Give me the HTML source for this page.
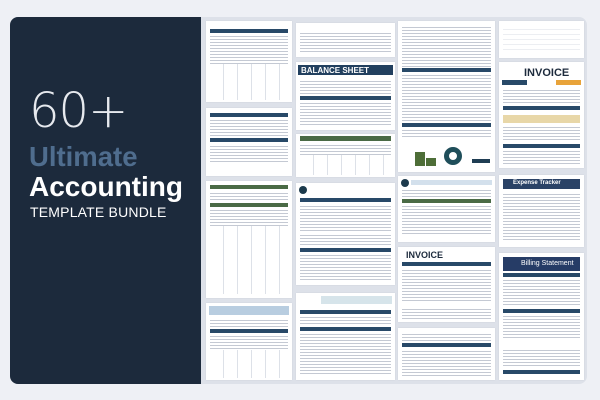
<!DOCTYPE html>
<html><head><style>
*{margin:0;padding:0;box-sizing:border-box}
body{width:600px;height:400px;background:#eef0f5;position:relative;overflow:hidden;font-family:"Liberation Sans",sans-serif}
.card{position:absolute;left:10px;top:17px;width:577px;height:367px;border-radius:8px;background:#dde1e9;overflow:hidden}
.left{position:absolute;left:0;top:0;width:191px;height:367px;background:#1c2a3c}
.t{position:absolute;background:#fff;overflow:hidden;box-shadow:0 0 1px #c5cad4}
.rows{position:absolute;left:4px;right:4px;background:repeating-linear-gradient(#fff 0 2px,#c4c9d3 2px 3px)}
.cols{position:absolute;left:4px;right:4px;background:repeating-linear-gradient(90deg,transparent 0 13px,#dde1e8 13px 14px)}
.bar{position:absolute;left:4px;right:4px;height:4px}
.n{background:#284968}.g{background:#4a6a45}
.txt{position:absolute;font-weight:bold;color:#1c2a3c}
</style></head><body>
<div class="card">
<div class="left">
<div style="position:absolute;left:19px;top:66px;font-size:48px;color:#e6e9ee;letter-spacing:-1px;font-family:'DejaVu Sans',sans-serif;font-weight:200">60+</div>
<div style="position:absolute;left:19px;top:124px;font-size:27.5px;font-weight:bold;color:#4f6d8e">Ultimate</div>
<div style="position:absolute;left:19px;top:154px;font-size:28px;font-weight:bold;color:#fff">Accounting</div>
<div style="position:absolute;left:20px;top:187px;font-size:14px;color:#fff;letter-spacing:.2px">TEMPLATE BUNDLE</div>
</div>

<!-- col1 -->
<div class="t" style="left:196px;top:4px;width:86px;height:81px"><div class="bar n" style="top:8px"></div><div class="rows" style="top:13px;height:30px"></div><div class="cols" style="top:43px;height:36px"></div></div>
<div class="t" style="left:196px;top:91px;width:86px;height:68px"><div class="bar n" style="top:5px"></div><div class="rows" style="top:10px;height:18px"></div><div class="bar n" style="top:30px"></div><div class="rows" style="top:36px;height:20px"></div></div>
<div class="t" style="left:196px;top:164px;width:86px;height:117px"><div class="bar g" style="top:4px"></div><div class="rows" style="top:10px;height:10px"></div><div class="bar g" style="top:22px"></div><div class="rows" style="top:27px;height:18px"></div><div class="cols" style="top:45px;height:68px"></div></div>
<div class="t" style="left:196px;top:286px;width:86px;height:77px"><div style="position:absolute;left:3px;right:3px;top:3px;height:9px;background:#b8cde0"></div><div class="rows" style="top:15px;height:10px"></div><div class="bar n" style="top:26px"></div><div class="rows" style="top:31px;height:16px"></div><div class="cols" style="top:47px;height:28px"></div></div>

<!-- col2 -->
<div class="t" style="left:286px;top:6px;width:99px;height:34px"><div class="rows" style="top:8px;height:22px"></div></div>
<div class="t" style="left:286px;top:45px;width:99px;height:68px"><div style="position:absolute;left:2px;right:2px;top:3px;height:10px;background:#22405f"></div><div class="txt" style="left:5px;top:4px;font-size:8px;color:#fff">BALANCE SHEET</div><div class="rows" style="top:17px;height:16px"></div><div class="bar n" style="top:34px"></div><div class="rows" style="top:39px;height:24px"></div></div>
<div class="t" style="left:286px;top:117px;width:99px;height:43px"><div class="bar g" style="top:2px;height:5px"></div><div class="rows" style="top:9px;height:12px"></div><div class="cols" style="top:21px;height:20px"></div></div>
<div class="t" style="left:286px;top:166px;width:99px;height:102px"><div style="position:absolute;left:3px;top:3px;width:8px;height:8px;border-radius:50%;background:#1c3a4c"></div><div class="bar n" style="top:15px"></div><div class="rows" style="top:21px;height:28px"></div><div class="rows" style="top:50px;height:14px"></div><div class="bar n" style="top:65px"></div><div class="rows" style="top:70px;height:28px"></div></div>
<div class="t" style="left:286px;top:276px;width:99px;height:87px"><div style="position:absolute;left:25px;right:3px;top:3px;height:8px;background:#d6e4ea"></div><div class="bar n" style="top:17px"></div><div class="rows" style="top:22px;height:10px"></div><div class="bar n" style="top:34px"></div><div class="rows" style="top:39px;height:44px"></div></div>

<!-- col3 -->
<div class="t" style="left:388px;top:4px;width:97px;height:151px"><div class="rows" style="top:4px;height:42px"></div><div class="bar n" style="top:47px"></div><div class="rows" style="top:52px;height:48px"></div><div class="bar n" style="top:102px"></div><div class="rows" style="top:107px;height:10px"></div>
<div style="position:absolute;left:17px;top:131px;width:10px;height:14px;background:#4e6e38"></div><div style="position:absolute;left:28px;top:137px;width:10px;height:8px;background:#4e6e38"></div><div style="position:absolute;left:46px;top:126px;width:18px;height:18px;border-radius:50%;border:5px solid #1f4e5a"></div><div style="position:absolute;left:74px;top:138px;width:18px;height:4px;background:#1f3d53"></div></div>
<div class="t" style="left:388px;top:159px;width:97px;height:66px"><div style="position:absolute;left:3px;top:3px;width:8px;height:8px;border-radius:50%;background:#1c3a4c"></div><div style="position:absolute;left:13px;right:3px;top:4px;height:5px;background:#d3e0ec"></div><div class="rows" style="top:12px;height:9px"></div><div class="bar g" style="top:23px"></div><div class="rows" style="top:28px;height:32px"></div></div>
<div class="t" style="left:388px;top:230px;width:97px;height:75px"><div class="txt" style="left:8px;top:3px;font-size:9px">INVOICE</div><div class="bar n" style="top:15px"></div><div class="rows" style="top:21px;height:34px"></div><div class="rows" style="top:60px;height:12px"></div></div>
<div class="t" style="left:388px;top:311px;width:97px;height:52px"><div class="rows" style="top:4px;height:9px"></div><div class="bar n" style="top:15px"></div><div class="rows" style="top:21px;height:28px"></div></div>

<!-- col4 -->
<div class="t" style="left:489px;top:4px;width:85px;height:37px"><div class="rows" style="top:4px;height:26px;background:repeating-linear-gradient(#fff 0 4px,#eceef2 4px 5px)"></div></div>
<div class="t" style="left:489px;top:45px;width:85px;height:106px"><div class="txt" style="left:25px;top:5px;font-size:11px">INVOICE</div><div style="position:absolute;left:3px;top:18px;width:25px;height:5px;background:#284968"></div><div style="position:absolute;right:3px;top:18px;width:25px;height:5px;background:#e8a33a"></div><div class="rows" style="top:26px;height:16px"></div><div class="bar n" style="top:44px"></div><div style="position:absolute;left:4px;right:4px;top:53px;height:8px;background:#e8d7a8"></div><div class="rows" style="top:63px;height:16px"></div><div class="bar n" style="top:82px"></div><div class="rows" style="top:87px;height:16px"></div></div>
<div class="t" style="left:489px;top:158px;width:85px;height:72px"><div style="position:absolute;left:4px;right:4px;top:4px;height:10px;background:#2a4266"></div><div class="txt" style="left:14px;top:5px;font-size:6px;color:#fff">Expense Tracker</div><div class="rows" style="top:17px;height:50px"></div></div>
<div class="t" style="left:489px;top:236px;width:85px;height:127px"><div style="position:absolute;left:4px;right:4px;top:4px;height:14px;background:#263c66"></div><div style="position:absolute;left:22px;top:7px;font-size:7px;color:#fff">Billing Statement</div><div class="bar n" style="top:20px"></div><div class="rows" style="top:25px;height:28px"></div><div class="bar n" style="top:56px"></div><div class="rows" style="top:61px;height:26px"></div><div class="rows" style="top:95px;height:20px"></div><div class="bar n" style="top:117px"></div></div>
</div>
</body></html>
